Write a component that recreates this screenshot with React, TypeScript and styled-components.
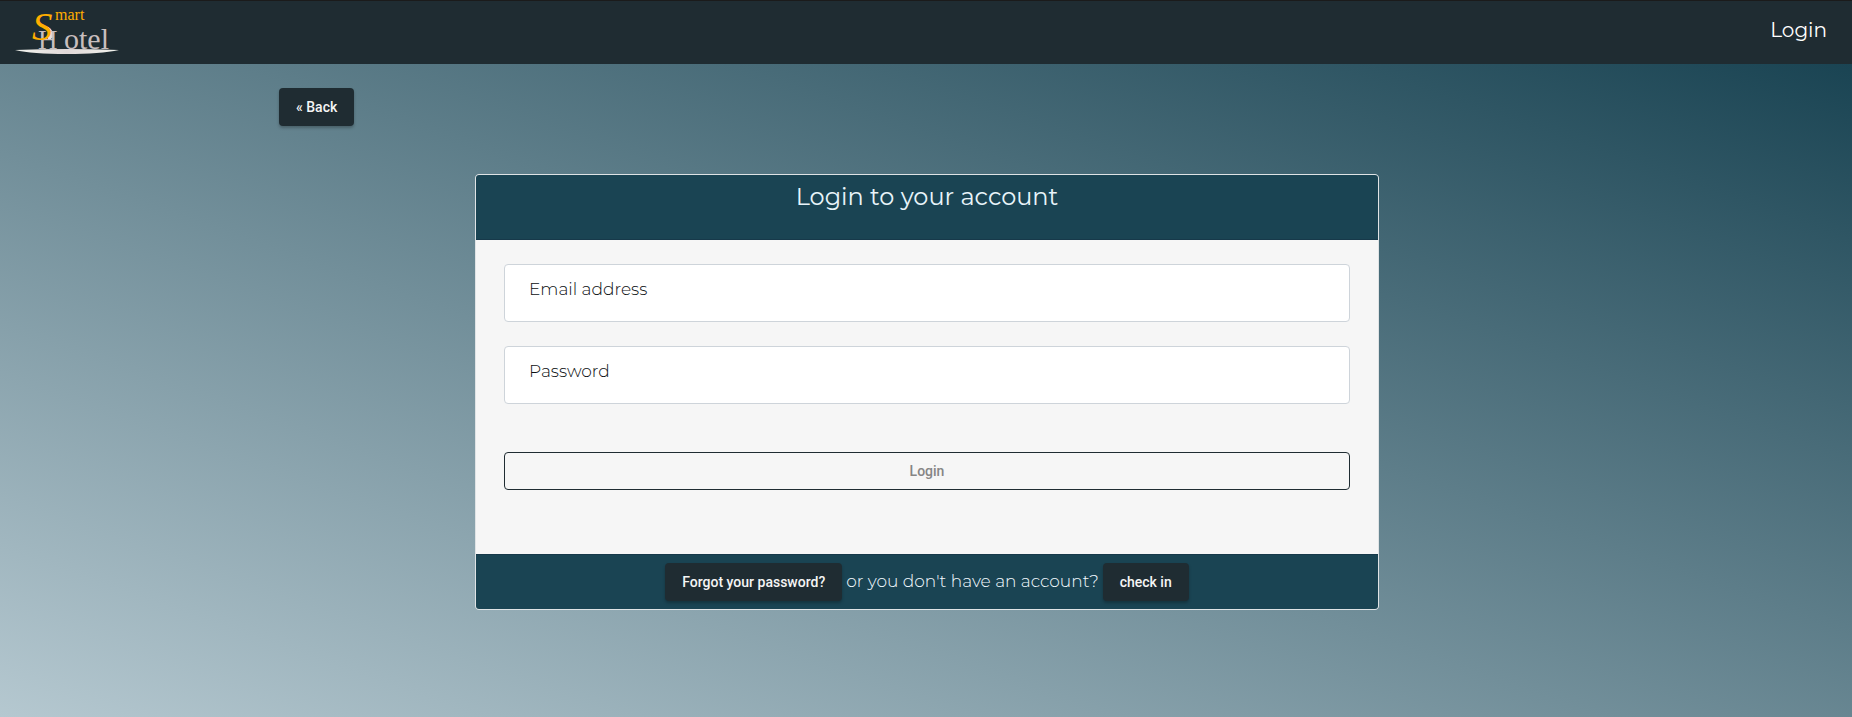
import React from "react";
import styled, { createGlobalStyle } from "styled-components";

const GlobalStyle = createGlobalStyle`
  *, *::before, *::after { box-sizing: border-box; }
  html, body { margin: 0; min-height: 100%; }
  body {
    font-family: Montserrat, Inter, "Open Sans", sans-serif;
    font-weight: 300;
    font-size: 17px;
    line-height: 24px;
    color: #0c0f12;
  }
`;

const Page = styled.div`
  display: flex;
  flex-direction: column;
  min-height: 100vh;
`;

const Navbar = styled.header`
  display: flex;
  align-items: center;
  justify-content: space-between;
  height: 64px;
  padding: 0 25px 0 12px;
  border-top: 1px solid #1b1b1b;
  background: #1f2c32;
`;

const Brand = styled.a`
  display: block;
  height: 62px;
`;

const NavLink = styled.a`
  padding-bottom: 5px;
  color: #ffffff;
  font-size: 20px;
  font-weight: 400;
  text-decoration: none;
`;

const Backdrop = styled.div`
  flex: 1;
  background: linear-gradient(to top right, #b5c8d0, #1a4453);
`;

const Main = styled.main`
  display: flex;
  flex-direction: column;
  gap: 48px;
  width: 100%;
  max-width: 1298px;
  margin: 0 auto;
  padding: 24px 0 48px 2px;
`;

const Button = styled.button<{ $outlined?: boolean }>`
  height: 38px;
  padding: 0 17px;
  border: ${(p) => (p.$outlined ? "1px solid #1f2c32" : "0")};
  border-radius: 4px;
  background: ${(p) => (p.$outlined ? "transparent" : "#1f2c32")};
  box-shadow: ${(p) => (p.$outlined ? "none" : "0 2px 3px rgba(0, 0, 0, 0.25)")};
  color: ${(p) => (p.$outlined ? "#858585" : "#f5f5f5")};
  font: 500 14px/36px Roboto, sans-serif;
  cursor: pointer;
`;

const BackRow = styled.div`
  display: flex;
`;

const Card = styled.section`
  width: 100%;
  max-width: 904px;
  margin: 0 auto;
  border: 1px solid #dfe3e5;
  border-radius: 4px;
  background: #f6f6f6;
  overflow: hidden;
`;

const CardHeader = styled.div`
  height: 65px;
  padding-top: 8px;
  border-bottom: 1px solid #17394a;
  background: #1a4453;
  color: #e8f4fa;
  text-align: center;
`;

const Title = styled.h1`
  margin: 0;
  font-size: 24px;
  line-height: 28px;
  font-weight: 400;
`;

const Form = styled.form`
  display: flex;
  flex-direction: column;
  gap: 24px;
  padding: 24px 28px 64px;

  > button { margin-top: 24px; }
`;

const Field = styled.div`
  position: relative;
`;

const Input = styled.input`
  display: block;
  width: 100%;
  height: 58px;
  padding: 16px 24px;
  border: 1px solid #ced4da;
  border-radius: 4px;
  background: #fff;
  font: inherit;
`;

const Label = styled.label`
  position: absolute;
  top: 13px;
  left: 25px;
  pointer-events: none;
`;

const CardFooter = styled.div`
  display: flex;
  align-items: center;
  justify-content: center;
  gap: 4px;
  height: 55px;
  border-top: 1px solid #17394a;
  background: #1a4453;
`;

const FooterText = styled.span`
  padding-bottom: 2px;
  color: #f2faff;
`;

function Logo() {
  return (
    <svg width="108" height="62" viewBox="0 -6 108 62" role="img" aria-label="Smart Hotel">
      <defs>
        <linearGradient id="plate" x1="0" x2="1">
          <stop offset="0" stopColor="#f2f4ee" />
          <stop offset="0.5" stopColor="#e0d8d8" />
          <stop offset="1" stopColor="#f2f4ee" />
        </linearGradient>
      </defs>
      <g fontFamily="Liberation Serif, serif">
        <path d="M36 19 Q42 22 41 29 Q39 32 36 32 Z" fill="#e4e0df" />
        <text x="26" y="41" fontSize="27" fill="#c8bebe">H</text>
        <text x="52" y="41" fontSize="30" fill="#c8bebe">otel</text>
        <text x="20" y="32" fontSize="41" fontStyle="italic" fill="#ffae00">S</text>
        <text x="43" y="12" fontSize="16" fill="#ffae00">mart</text>
      </g>
      <path d="M3 42 Q55 40 107 42 Q88 46 55 46 Q20 46 3 42 Z" fill="url(#plate)" />
    </svg>
  );
}

export default function App() {
  return (
    <>
      <GlobalStyle />
      <Page>
        <Navbar>
          <Brand href="#"><Logo /></Brand>
          <NavLink href="#login">Login</NavLink>
        </Navbar>
        <Backdrop>
          <Main>
            <BackRow><Button type="button">« Back</Button></BackRow>
            <Card>
              <CardHeader><Title>Login to your account</Title></CardHeader>
              <Form>
                <Field>
                  <Input id="email" type="email" />
                  <Label htmlFor="email">Email address</Label>
                </Field>
                <Field>
                  <Input id="password" type="password" />
                  <Label htmlFor="password">Password</Label>
                </Field>
                <Button type="submit" $outlined>Login</Button>
              </Form>
              <CardFooter>
                <Button type="button">Forgot your password?</Button>
                <FooterText>or you don't have an account?</FooterText>
                <Button type="button">check in</Button>
              </CardFooter>
            </Card>
          </Main>
        </Backdrop>
      </Page>
    </>
  );
}
